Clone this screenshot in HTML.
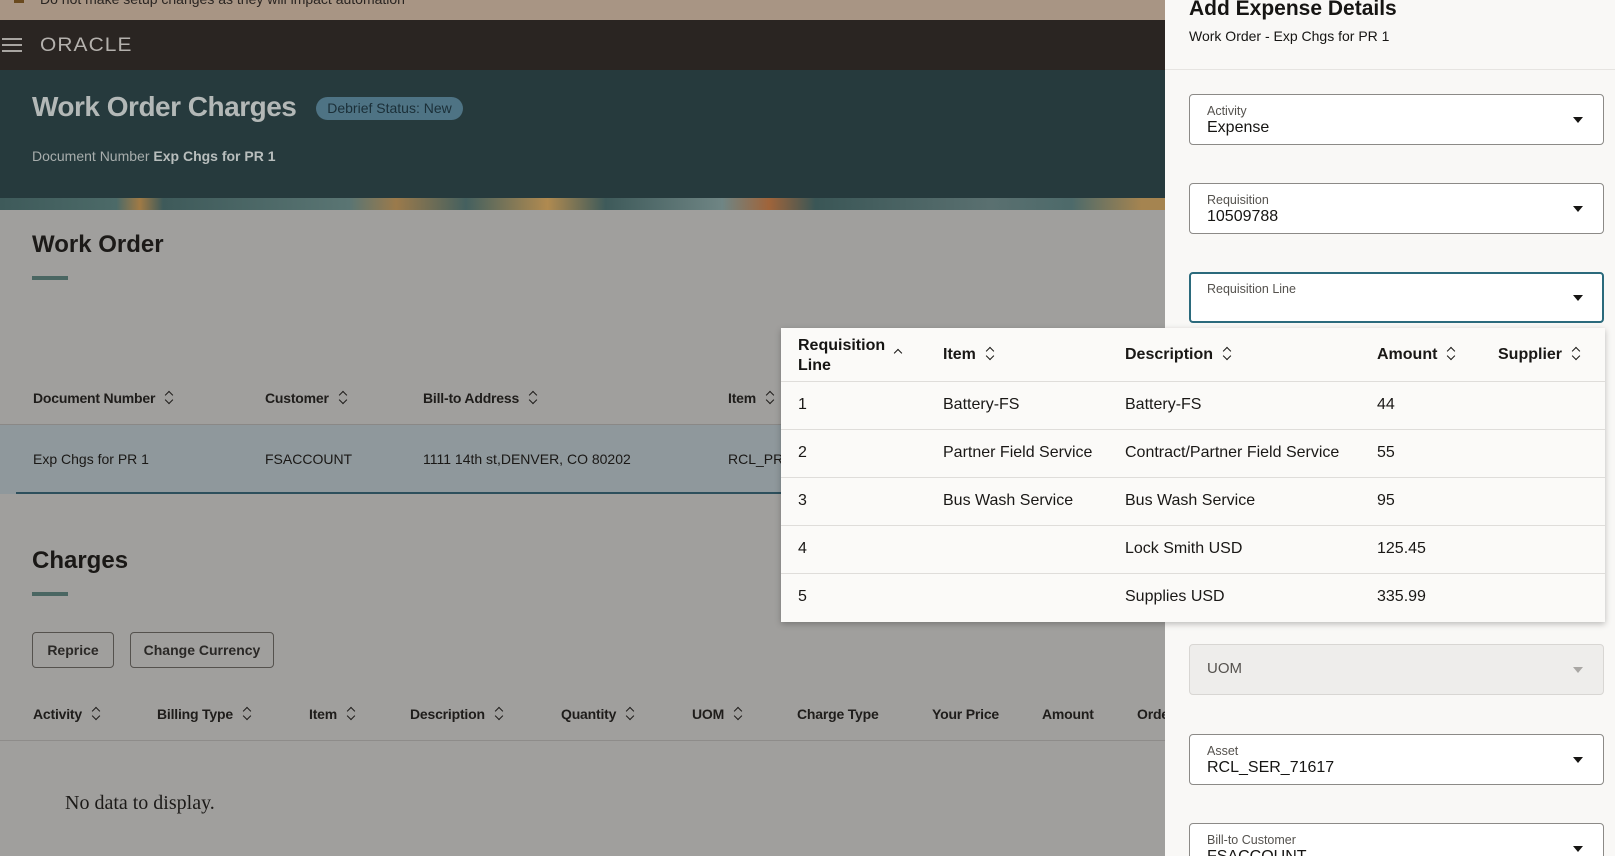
<!DOCTYPE html>
<html><head><meta charset="utf-8"><style>
*{box-sizing:border-box;margin:0;padding:0}
html,body{width:1615px;height:856px;overflow:hidden}
body{position:relative;font-family:"Liberation Sans",sans-serif;background:#a09f9d;color:#1a1816}
#w{position:absolute;left:0;top:0;width:1615px;height:856px;overflow:hidden}
.a{position:absolute;white-space:nowrap}
.sort{display:inline-block;margin-left:10px;vertical-align:-1px;width:8px;height:14px;position:relative}
.sort:before,.sort:after{content:"";position:absolute;left:1px;width:5px;height:5px;border-left:1.5px solid currentColor;border-top:1.5px solid currentColor}
.sort:before{top:2px;transform:rotate(45deg)}
.sort:after{top:7px;transform:rotate(-135deg)}
.hdr{font-size:14px;font-weight:bold;color:#1f1d1b;letter-spacing:-0.2px}
.fld{position:absolute;left:1189px;width:415px;height:51px;border:1px solid #8c8a87;border-radius:4px;background:#fff}
.fld .l{position:absolute;left:17px;top:9px;font-size:12.5px;color:#55524e}
.fld .v{position:absolute;left:17px;top:24px;font-size:16px;color:#161513}
.fld .c{position:absolute;right:20px;top:22px;width:0;height:0;border-left:5px solid transparent;border-right:5px solid transparent;border-top:6px solid #161513}
</style></head><body><div id="w">
<div class="a" style="left:0;top:0;width:1165px;height:20px;background:#a89584"></div>
<div class="a" style="left:14px;top:-3px;width:10px;height:6px;background:#6a4a1e"></div>
<div class="a" style="left:40px;top:-9px;font-size:14px;color:#2a2522">Do not make setup changes as they will impact automation</div>
<div class="a" style="left:0;top:20px;width:1165px;height:50px;background:#2a2522"></div>
<div class="a" style="left:2px;top:38px;width:20px;height:2px;background:#a8a5a1;box-shadow:0 6px 0 #a8a5a1,0 12px 0 #a8a5a1"></div>
<div class="a" style="left:40px;top:35px;font-size:19px;letter-spacing:1px;color:#b4b1ad;transform:scaleX(1.1);transform-origin:left">ORACLE</div>
<div class="a" style="left:0;top:70px;width:1165px;height:128px;background:#263a3d"></div>
<div class="a" style="left:32px;top:91px;font-size:28px;font-weight:bold;color:#b3b8b7;letter-spacing:-0.5px">Work Order Charges</div>
<div class="a" style="left:316px;top:97px;width:147px;height:23px;border-radius:12px;background:#4e7384;color:#1b2f38;font-size:14px;text-align:center;line-height:23px">Debrief Status: New</div>
<div class="a" style="left:32px;top:148px;font-size:14px;color:#a7adac">Document Number <b style="color:#b8bebd">Exp Chgs for PR 1</b></div>
<div class="a" style="left:0;top:198px;width:1165px;height:12px;background:linear-gradient(90deg,#3e5a5a 0,#4c6a68 10%,#a07a45 12%,#3e5a5a 14%,#5a7573 30%,#9b7a4b 34%,#44605f 40%,#b08a50 47%,#3e5a5a 52%,#6f8584 62%,#a0643a 66%,#3a5656 70%,#5a7070 85%,#4d6a6a 92%,#a58450 98%)"></div>
<div class="a" style="left:32px;top:231px;font-size:24px;font-weight:bold;color:#1c1a18">Work Order</div>
<div class="a" style="left:32px;top:276px;width:36px;height:4px;background:#4a6662"></div>
<div class="a hdr" style="left:33px;top:390px">Document Number<span class="sort"></span></div>
<div class="a hdr" style="left:265px;top:390px">Customer<span class="sort"></span></div>
<div class="a hdr" style="left:423px;top:390px">Bill-to Address<span class="sort"></span></div>
<div class="a hdr" style="left:728px;top:390px">Item<span class="sort"></span></div>
<div class="a" style="left:0;top:424px;width:1165px;height:70px;background:#8f989c;border-top:1px solid #8a8886"></div>
<div class="a" style="left:16px;top:492px;width:1150px;height:2px;background:#2d4f5c"></div>
<div class="a" style="left:33px;top:451px;font-size:14px">Exp Chgs for PR 1</div>
<div class="a" style="left:265px;top:451px;font-size:14px">FSACCOUNT</div>
<div class="a" style="left:423px;top:451px;font-size:14px">1111 14th st,DENVER, CO 80202</div>
<div class="a" style="left:728px;top:451px;font-size:14px">RCL_PR_</div>
<div class="a" style="left:32px;top:547px;font-size:24px;font-weight:bold">Charges</div>
<div class="a" style="left:32px;top:592px;width:36px;height:4px;background:#4a6662"></div>
<div class="a" style="left:32px;top:632px;width:82px;height:36px;border:1px solid #55524e;border-radius:4px;font-size:14px;text-align:center;line-height:34px;font-weight:bold;color:#2a2826">Reprice</div>
<div class="a" style="left:130px;top:632px;width:144px;height:36px;border:1px solid #55524e;border-radius:4px;font-size:14px;text-align:center;line-height:34px;font-weight:bold;color:#2a2826">Change Currency</div>
<div class="a hdr" style="left:33px;top:706px">Activity<span class="sort"></span></div>
<div class="a hdr" style="left:157px;top:706px">Billing Type<span class="sort"></span></div>
<div class="a hdr" style="left:309px;top:706px">Item<span class="sort"></span></div>
<div class="a hdr" style="left:410px;top:706px">Description<span class="sort"></span></div>
<div class="a hdr" style="left:561px;top:706px">Quantity<span class="sort"></span></div>
<div class="a hdr" style="left:692px;top:706px">UOM<span class="sort"></span></div>
<div class="a hdr" style="left:797px;top:706px">Charge Type</div>
<div class="a hdr" style="left:932px;top:706px">Your Price</div>
<div class="a hdr" style="left:1042px;top:706px">Amount</div>
<div class="a hdr" style="left:1137px;top:706px">Order</div>
<div class="a" style="left:0;top:740px;width:1165px;height:1px;background:#8e8c8a"></div>
<div class="a" style="left:65px;top:792px;font-family:'Liberation Serif',serif;font-size:20px;color:#1c1a18">No data to display.</div>
<div class="a" style="left:1165px;top:0;width:450px;height:856px;background:#f9f8f6"></div>
<div class="a" style="left:1189px;top:-3px;font-size:21px;font-weight:bold;color:#161513">Add Expense Details</div>
<div class="a" style="left:1189px;top:28px;font-size:14px;color:#161513">Work Order - Exp Chgs for PR 1</div>
<div class="a" style="left:1165px;top:69px;width:450px;height:1px;background:#e6e4e1"></div>
<div class="fld" style="top:94px"><div class="l">Activity</div><div class="v">Expense</div><div class="c"></div></div>
<div class="fld" style="top:183px"><div class="l">Requisition</div><div class="v">10509788</div><div class="c"></div></div>
<div class="fld" style="top:272px;border:2px solid #2b6a7c"><div class="l" style="left:16px;top:8px">Requisition Line</div><div class="c" style="top:21px;right:19px"></div></div>
<div class="fld" style="top:644px;background:#eeedeb;border-color:#d8d6d3"><div class="v" style="top:15px;color:#55524e;font-size:15px">UOM</div><div class="c" style="border-top-color:#a9a7a4;top:22px"></div></div>
<div class="fld" style="top:734px"><div class="l">Asset</div><div class="v">RCL_SER_71617</div><div class="c"></div></div>
<div class="fld" style="top:823px;height:60px"><div class="l">Bill-to Customer</div><div class="v">FSACCOUNT</div><div class="c"></div></div>
<div class="a" style="left:781px;top:328px;width:824px;height:294px;background:#fbfaf8;box-shadow:0 2px 6px rgba(0,0,0,.25)">
 <div class="a" style="left:17px;top:8px;font-size:16px;font-weight:bold;line-height:20px;color:#161513;white-space:normal;width:90px">Requisition Line</div>
 <div class="a" style="left:114px;top:22px;width:6px;height:6px;border-left:1.5px solid #161513;border-top:1.5px solid #161513;transform:rotate(45deg)"></div>
 <div class="a" style="left:162px;top:18px;font-size:16px;font-weight:bold">Item<span class="sort"></span></div>
 <div class="a" style="left:344px;top:18px;font-size:16px;font-weight:bold">Description<span class="sort"></span></div>
 <div class="a" style="left:596px;top:18px;font-size:16px;font-weight:bold">Amount<span class="sort"></span></div>
 <div class="a" style="left:717px;top:18px;font-size:16px;font-weight:bold">Supplier<span class="sort"></span></div>
 <div class="a" style="left:0;top:53px;width:824px;height:1px;background:#dfddda"></div>
 <div class="a" style="left:0;top:101px;width:824px;height:1px;background:#dfddda"></div>
 <div class="a" style="left:0;top:149px;width:824px;height:1px;background:#dfddda"></div>
 <div class="a" style="left:0;top:197px;width:824px;height:1px;background:#dfddda"></div>
 <div class="a" style="left:0;top:245px;width:824px;height:1px;background:#dfddda"></div>
 <div class="a" style="left:17px;top:68px;font-size:16px">1</div><div class="a" style="left:162px;top:68px;font-size:16px">Battery-FS</div><div class="a" style="left:344px;top:68px;font-size:16px">Battery-FS</div><div class="a" style="left:596px;top:68px;font-size:16px">44</div>
 <div class="a" style="left:17px;top:116px;font-size:16px">2</div><div class="a" style="left:162px;top:116px;font-size:16px">Partner Field Service</div><div class="a" style="left:344px;top:116px;font-size:16px">Contract/Partner Field Service</div><div class="a" style="left:596px;top:116px;font-size:16px">55</div>
 <div class="a" style="left:17px;top:164px;font-size:16px">3</div><div class="a" style="left:162px;top:164px;font-size:16px">Bus Wash Service</div><div class="a" style="left:344px;top:164px;font-size:16px">Bus Wash Service</div><div class="a" style="left:596px;top:164px;font-size:16px">95</div>
 <div class="a" style="left:17px;top:212px;font-size:16px">4</div><div class="a" style="left:344px;top:212px;font-size:16px">Lock Smith USD</div><div class="a" style="left:596px;top:212px;font-size:16px">125.45</div>
 <div class="a" style="left:17px;top:260px;font-size:16px">5</div><div class="a" style="left:344px;top:260px;font-size:16px">Supplies USD</div><div class="a" style="left:596px;top:260px;font-size:16px">335.99</div>
</div>
</div></body></html>
